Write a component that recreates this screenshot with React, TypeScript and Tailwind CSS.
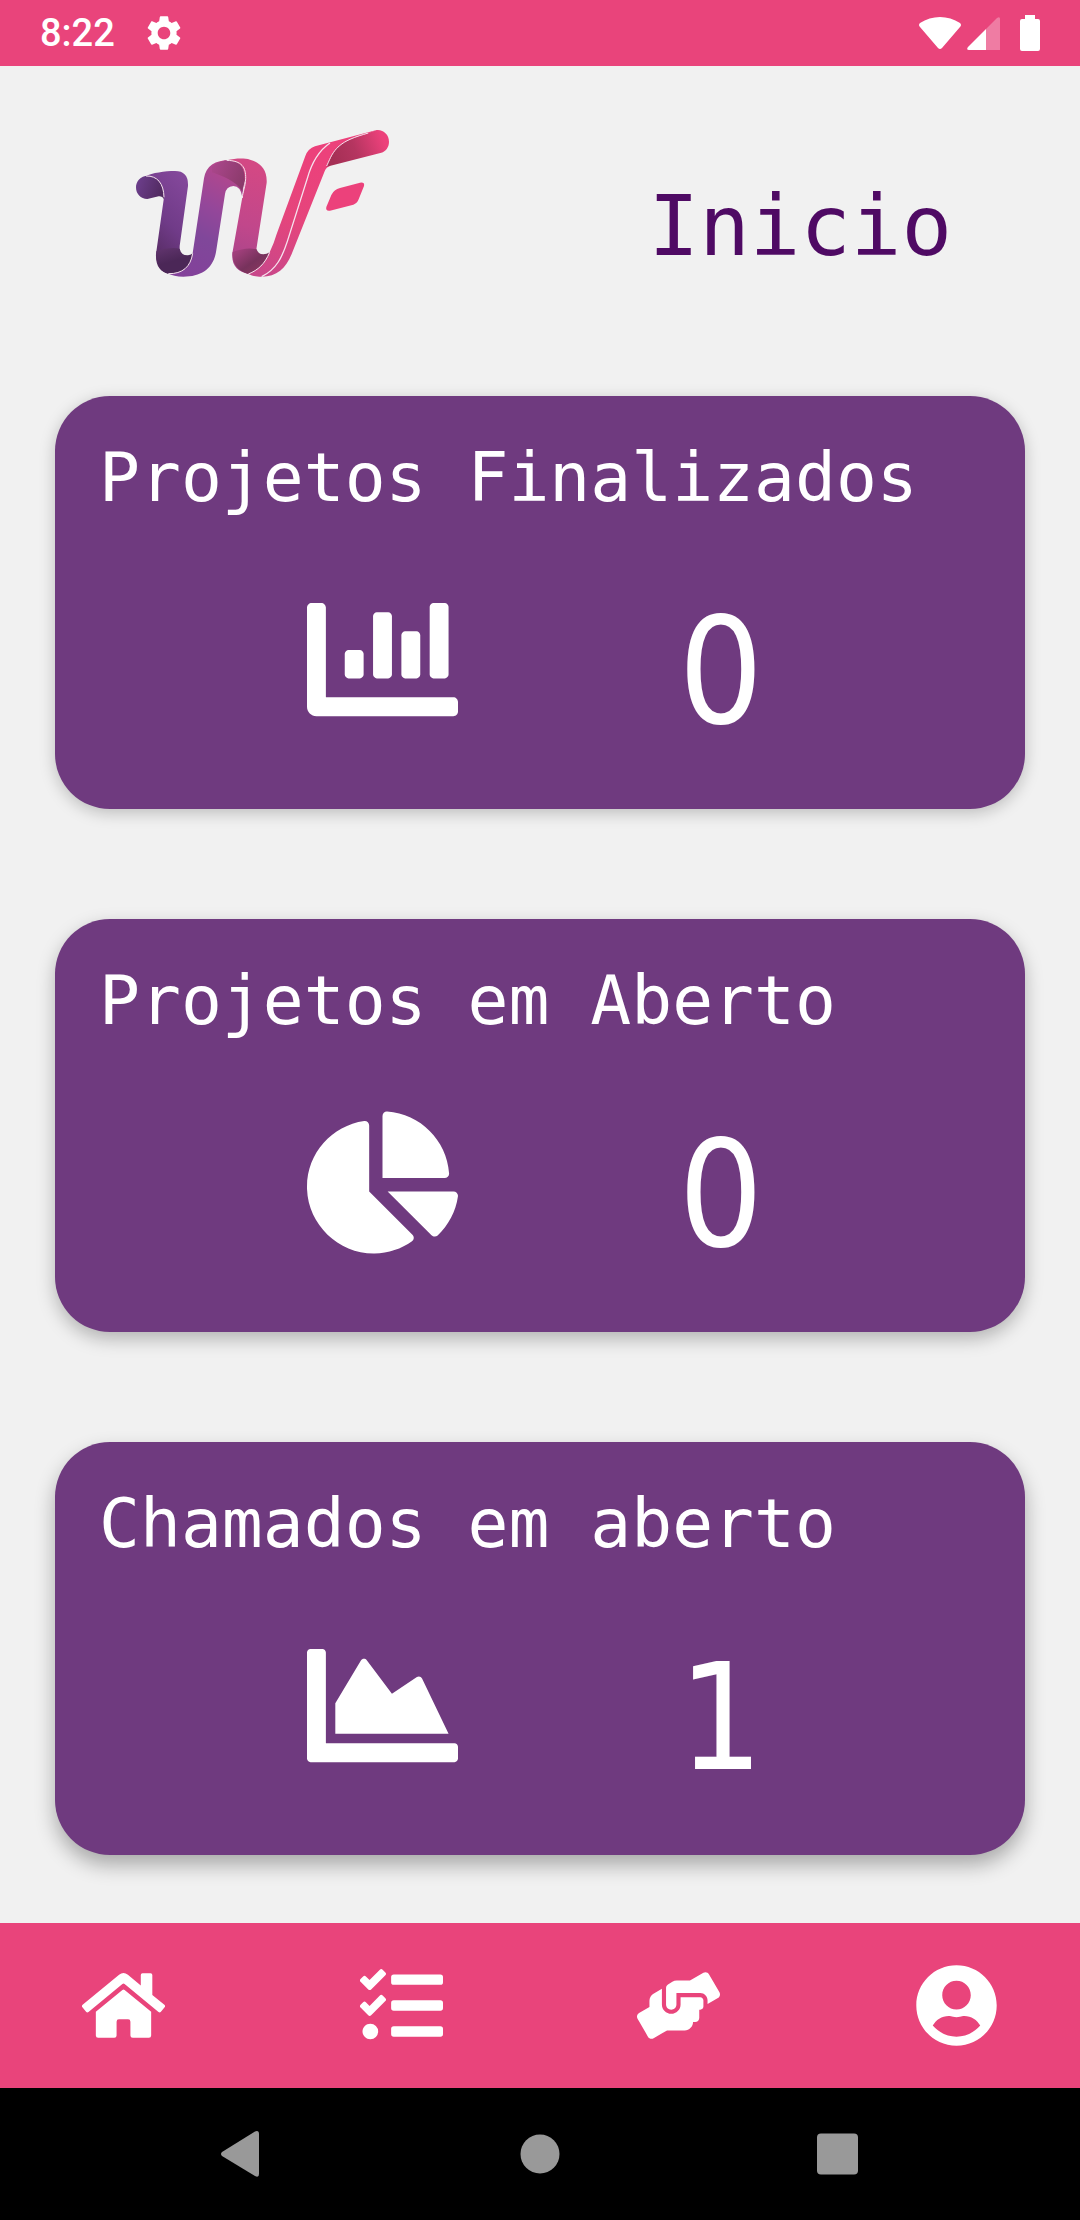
import React from "react";
import {
  FaChartArea,
  FaChartBar,
  FaChartPie,
  FaHandsHelping,
  FaHome,
  FaTasks,
  FaUserCircle,
} from "react-icons/fa";
import { MdSettings } from "react-icons/md";

const cards = [
  {
    title: "Projetos Finalizados",
    value: 0,
    Icon: FaChartBar,
    shadow: "shadow-[0_4px_16px_rgba(0,0,0,0.22)]",
  },
  {
    title: "Projetos em Aberto",
    value: 0,
    Icon: FaChartPie,
    shadow: "shadow-[0_7px_18px_rgba(0,0,0,0.26)]",
  },
  {
    title: "Chamados em aberto",
    value: 1,
    Icon: FaChartArea,
    shadow: "shadow-[0_10px_20px_rgba(0,0,0,0.3)]",
  },
];

const tabs = [
  { label: "Inicio", href: "#inicio", Icon: FaHome },
  { label: "Projetos", href: "#projetos", Icon: FaTasks },
  { label: "Chamados", href: "#chamados", Icon: FaHandsHelping },
  { label: "Perfil", href: "#perfil", Icon: FaUserCircle },
];

const StatusBar = () => (
  <div className="h-[66px] bg-[#e9447b] text-white flex items-center justify-between px-10">
    <div className="flex items-center gap-7">
      <span className="font-[Roboto,sans-serif] font-medium text-[38px] leading-12">8:22</span>
      <MdSettings className="size-[42px]" />
    </div>
    <div className="flex items-center">
      {/* Wifi */}
      <svg viewBox="0 0 42 32" className="w-[42px] h-8" fill="currentColor">
        <path d="M1 6C13-2 29-2 41 6Q43 8 41 10L23 31Q21 33 19 31L1 10Q-1 8 1 6Z" />
      </svg>
      {/* Signal */}
      <svg viewBox="0 0 33 33" className="w-[33px] h-[33px] ml-1.5" fill="currentColor">
        <path d="M33 2Q33-1 30 1L19 12V33H33Z" opacity="0.3" />
        <path d="M19 12V33H2Q-1 33 1 30Z" />
      </svg>
      {/* Battery */}
      <svg viewBox="0 0 20 36" className="w-5 h-9 ml-5" fill="currentColor">
        <path d="M5 0H15V4H18Q20 4 20 6V34Q20 36 18 36H2Q0 36 0 34V6Q0 4 2 4H5Z" />
      </svg>
    </div>
  </div>
);

const Logo = () => (
  <svg viewBox="0 0 870 540" className="w-[290px] h-45" role="img" aria-label="WF">
    <defs>
      <linearGradient id="curl" x1="0" y1="0" x2="1" y2="0.3">
        <stop offset="0" stopColor="#6f4090" />
        <stop offset="1" stopColor="#512a60" />
      </linearGradient>
      <linearGradient id="stem1" x1="0.7" y1="0" x2="0.3" y2="1">
        <stop offset="0" stopColor="#83479a" />
        <stop offset="0.5" stopColor="#703b88" />
        <stop offset="1" stopColor="#4f2859" />
      </linearGradient>
      <linearGradient id="fold1" x1="0" y1="0" x2="0.4" y2="1">
        <stop offset="0" stopColor="#62356f" />
        <stop offset="0.6" stopColor="#4b2757" />
        <stop offset="1" stopColor="#4b2757" />
      </linearGradient>
      <linearGradient id="stem2" gradientUnits="userSpaceOnUse" x1="350" y1="170" x2="180" y2="490">
        <stop offset="0" stopColor="#b9478a" />
        <stop offset="0.4" stopColor="#94479a" />
        <stop offset="0.65" stopColor="#80479a" />
        <stop offset="1" stopColor="#83419a" />
      </linearGradient>
      <linearGradient id="fold2" gradientUnits="userSpaceOnUse" x1="280" y1="170" x2="375" y2="210">
        <stop offset="0" stopColor="#a9468a" />
        <stop offset="1" stopColor="#8a3a6a" />
      </linearGradient>
      <linearGradient id="stem3" gradientUnits="userSpaceOnUse" x1="430" y1="180" x2="350" y2="460">
        <stop offset="0" stopColor="#d34884" />
        <stop offset="0.6" stopColor="#c1478b" />
        <stop offset="1" stopColor="#a9458a" />
      </linearGradient>
      <linearGradient id="fold3" gradientUnits="userSpaceOnUse" x1="360" y1="420" x2="410" y2="490">
        <stop offset="0" stopColor="#a03f7b" />
        <stop offset="0.6" stopColor="#77325c" />
        <stop offset="1" stopColor="#86365f" />
      </linearGradient>
      <linearGradient id="stem4" gradientUnits="userSpaceOnUse" x1="590" y1="140" x2="420" y2="500">
        <stop offset="0" stopColor="#ec417b" />
        <stop offset="0.5" stopColor="#e5457c" />
        <stop offset="1" stopColor="#c8478a" />
      </linearGradient>
      <linearGradient id="arm" gradientUnits="userSpaceOnUse" x1="640" y1="150" x2="790" y2="90">
        <stop offset="0" stopColor="#a52f55" />
        <stop offset="0.45" stopColor="#b53560" />
        <stop offset="1" stopColor="#ec417b" />
      </linearGradient>
    </defs>

    {/* W, first half */}
    <path fill="url(#curl)" d="M85 197C60 197 48 215 48 232C48 252 62 267 82 267L116 259Q127 258 132 268L136 240C130 212 110 197 85 197Z" />
    <path fill="url(#stem1)" d="M78 198C95 189 135 183 165 183Q206 183 204 228L179 408L178 470L145 491C122 486 106 468 108 432L132 262C132 222 112 197 78 198Z" />
    <path fill="url(#fold1)" d="M109 424Q150 410 179 416Q184 436 202 436Q212 436 218 430C216 475 185 495 145 491C122 486 107 465 109 424Z" />
    <path fill="url(#stem2)" d="M218 430L252 205C258 168 285 150 330 150L376 175L367 262Q362 228 340 228Q318 230 315 252L289 420C282 475 245 500 190 500C170 500 155 495 145 491C190 492 214 468 218 430Z" />

    {/* W, second half */}
    <path fill="url(#fold2)" d="M276 170Q296 152 330 150C366 152 378 170 377 205L366 244Q350 212 276 187Z" />
    <path fill="url(#stem3)" d="M320 151C350 144 374 145 390 149C422 158 442 180 440 218L410 412L400 480L385 492C355 485 334 468 337 430L367 262C380 205 382 152 320 151Z" />
    <path fill="url(#fold3)" d="M338 426Q380 410 410 418Q414 433 430 433Q440 433 449 427C434 466 412 486 385 492C355 484 335 462 338 426Z" />

    {/* F */}
    <path fill="url(#stem4)" d="M449 427Q462 400 470 372L556 138Q564 116 585 109L770 60L745 70C700 84 660 100 645 125L630 168Q618 172 614 184L515 432C498 475 470 500 425 500C406 500 396 497 385 492C415 480 436 460 449 427Z" />
    <path fill="url(#arm)" d="M620 170C632 145 640 110 690 88C715 77 735 73 770 60C790 58 807 74 807 95C807 112 797 124 784 128Z" />
    <path fill="#ec417b" d="M660 234L720 218Q735 216 732 228L716 268Q711 281 700 284L630 302Q616 304 619 291L634 255Q642 238 660 234Z" />

    {/* Edge highlights */}
    <g fill="none" stroke="#f6e3ee" strokeWidth="3">
      <path d="M78 198C112 197 131 220 132 262" />
      <path d="M145 491C188 492 212 470 218 430" />
      <path d="M320 151C366 152 378 172 377 206C376 232 368 244 367 264" />
      <path d="M385 492C415 480 434 462 449 427" />
      <path strokeWidth="4" d="M425 500C470 478 487 440 502 394L562 205C576 155 596 122 630 99" />
      <path d="M620 168C632 143 640 110 690 88C710 79 725 75 745 69" />
    </g>
  </svg>
);

const App = () => {
  return (
    <div className="min-h-screen flex flex-col bg-[#f1f1f1]">
      <StatusBar />

      <main className="flex-1">
        {/* Header */}
        <header className="flex items-end justify-between pl-30 pr-32 pt-11 pb-[106px]">
          <Logo />
          <h1 className="font-['DejaVu_Sans_Mono',monospace] text-[84px] leading-24 text-[#4f0a64] pb-4">
            Inicio
          </h1>
        </header>

        {/* Cards */}
        <div className="flex flex-col gap-[110px] px-[55px] pb-17">
          {cards.map(({ title, value, Icon, shadow }) => (
            <section
              key={title}
              className={`bg-[#6f3a7f] text-white rounded-[55px] pt-[42px] pb-[49px] ${shadow}`}
            >
              <h2 className="font-['DejaVu_Sans_Mono',monospace] text-[68px] leading-20 px-11 whitespace-nowrap">
                {title}
              </h2>
              <div className="mt-[66px] px-[26%] flex items-start justify-between">
                <Icon className="size-[151px]" />
                <span className="w-26 text-center font-['DejaVu_Sans_Condensed','DejaVu_Sans',sans-serif] text-[148px] leading-44">
                  {value}
                </span>
              </div>
            </section>
          ))}
        </div>
      </main>

      {/* Tabs */}
      <nav className="h-[165px] bg-[#e9447b] text-white flex items-center justify-between px-[82px]">
        {tabs.map(({ label, href, Icon }) => (
          <a key={label} href={href} aria-label={label}>
            <Icon className="size-[83px]" />
          </a>
        ))}
      </nav>

      {/* System buttons */}
      <div className="h-33 bg-black text-[#999999] flex items-center justify-center gap-63">
        <button aria-label="Voltar">
          <svg viewBox="0 0 48 48" className="size-12" fill="currentColor">
            <path d="M39 1.500Q43 0 43 4V44Q43 48 39 46L6 26Q4 24 6 22Z" />
          </svg>
        </button>
        <button aria-label="Tela inicial">
          <svg viewBox="0 0 48 48" className="size-12" fill="currentColor">
            <circle cx="24" cy="24" r="19.500" />
          </svg>
        </button>
        <button aria-label="Recentes">
          <svg viewBox="0 0 48 48" className="size-12" fill="currentColor">
            <rect x="1" y="3.500" width="41" height="41" rx="4" />
          </svg>
        </button>
      </div>
    </div>
  );
};

export default App;
